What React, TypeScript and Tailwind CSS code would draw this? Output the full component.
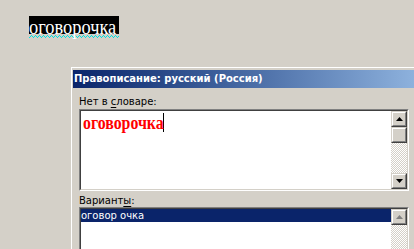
import type { ReactNode } from 'react'

const ui = { fontFamily: '"DejaVu Sans", Verdana, sans-serif' }
const serif = { fontFamily: '"Liberation Serif", "Times New Roman", serif' }

function Arrow({ up, disabled }: { up?: boolean; disabled?: boolean }) {
  return (
    <svg width="7" height="4" viewBox="0 0 7 4" className="block">
      <polygon
        points={up ? '3.5,0 7,4 0,4' : '0,0 7,0 3.5,4'}
        fill={disabled ? '#808080' : '#000000'}
      />
    </svg>
  )
}

function RaisedBox({ children, className = '' }: { children?: ReactNode; className?: string }) {
  return (
    <div className={`border border-t-[#d4d0c8] border-l-[#d4d0c8] border-r-[#404040] border-b-[#404040] ${className}`}>
      <div className="h-full w-full border border-t-white border-l-white border-r-[#808080] border-b-[#808080] bg-[#d4d0c8] flex items-center justify-center">
        {children}
      </div>
    </div>
  )
}

function Sunken({ children, className = '' }: { children: ReactNode; className?: string }) {
  return (
    <div className={`border border-t-[#808080] border-l-[#808080] border-r-white border-b-white ${className}`}>
      <div className="h-full w-full border border-t-[#404040] border-l-[#404040] border-r-[#d4d0c8] border-b-[#d4d0c8] bg-white flex">
        {children}
      </div>
    </div>
  )
}

const checker =
  'bg-[repeating-conic-gradient(#d4d0c8_0_25%,#ffffff_0_50%)] bg-[length:2px_2px]'

// spell-check squiggle under the word
function Wavy() {
  const rows = [2, 1, 0, 1]
  return (
    <svg width="90" height="3" className="block" shapeRendering="crispEdges">
      {Array.from({ length: 90 }, (_, x) => (
        <rect key={x} x={x} y={rows[x % 4]} width="1" height="1" fill="#00e0e0" />
      ))}
    </svg>
  )
}

export default function App() {
  return (
    <div className="w-[414px] h-[249px] overflow-hidden bg-[#d4d0c8]" style={ui}>
      {/* word in the document */}
      <div className="pt-[16px] pl-[29px]">
        <div className="w-[90px] h-[18px] bg-black text-white text-[20px] leading-[22px] whitespace-nowrap" style={serif}>
          <span className="inline-block origin-left scale-x-[0.92]">оговорочка</span>
        </div>
        <div className="pt-[1px]">
          <Wavy />
        </div>
      </div>

      {/* spelling dialog */}
      <div className="ml-[70px] mt-[28px] w-[400px] border-l border-t border-[#d4d0c8]">
        <div className="border-l border-t border-white pl-[1px] pt-[2px] bg-[#d4d0c8]">
          <div className="h-[18px] bg-gradient-to-r from-[#0a246a] to-[#a6caf0] text-white font-bold text-[10px] leading-[18px] pl-[1px]">
            Правописание: русский (Россия)
          </div>

          <div className="pl-[6px] pt-[7px] text-[10px] text-black">
            <div className="h-[13px] leading-[13px]">
              Нет в <span className="underline underline-offset-2">с</span>ловаре:
            </div>
            <Sunken className="mt-[1px] w-[330px] h-[82px]">
              <div className="flex-1 pl-[2px] pt-[2px] whitespace-nowrap">
                <span className="inline-block origin-left scale-x-[0.88] w-[80px] text-[18px] leading-[20px] font-bold text-[#ff0000]" style={serif}>
                  оговорочка
                </span>
                <span className="inline-block align-top w-[1px] h-[19px] bg-black" />
              </div>
              <div className="w-[16px] flex flex-col">
                <RaisedBox className="h-[16px]"><Arrow up /></RaisedBox>
                <RaisedBox className="h-[16px]" />
                <div className={`flex-1 ${checker}`} />
                <RaisedBox className="h-[16px]"><Arrow /></RaisedBox>
              </div>
            </Sunken>

            <div className="mt-[3px] h-[13px] leading-[13px]">
              Вариант<span className="underline underline-offset-2">ы</span>:
            </div>
            <Sunken className="w-[330px] h-[80px]">
              <div className="flex-1">
                <div className="h-[13px] leading-[13px] bg-[#0a246a] text-white">оговор очка</div>
              </div>
              <div className="w-[16px] flex flex-col">
                <RaisedBox className="h-[16px]"><Arrow up disabled /></RaisedBox>
                <div className={`flex-1 ${checker}`} />
              </div>
            </Sunken>
          </div>
        </div>
      </div>
    </div>
  )
}
